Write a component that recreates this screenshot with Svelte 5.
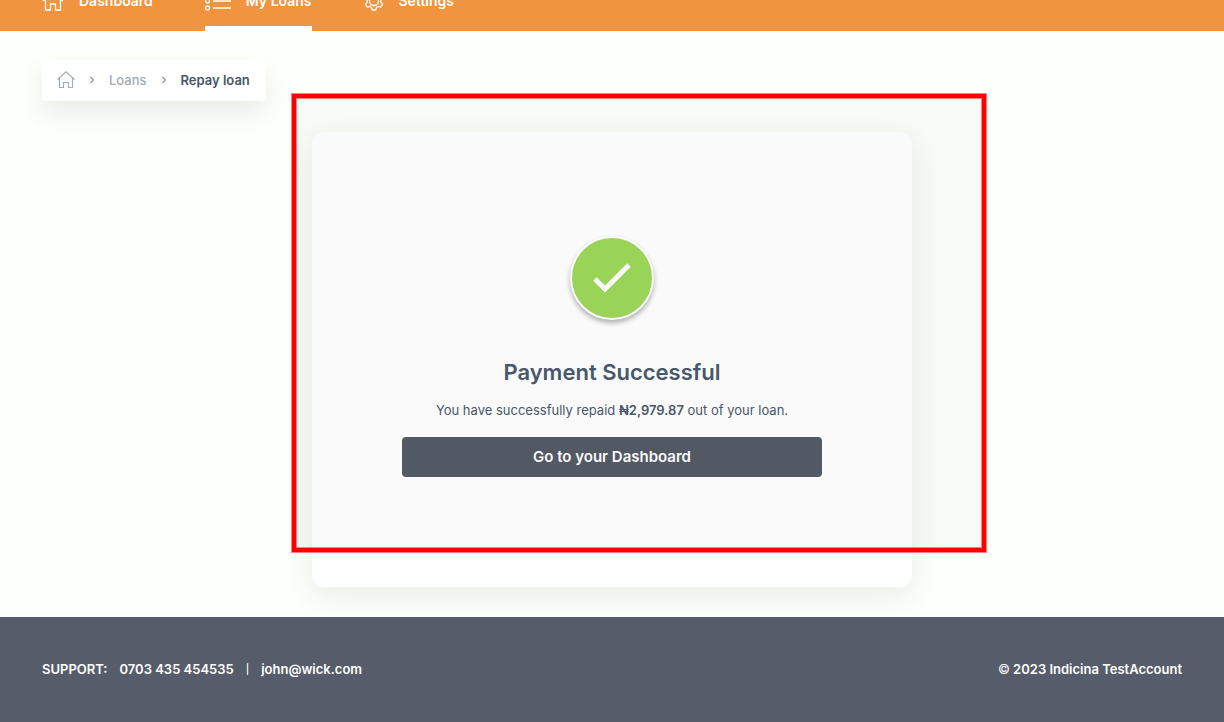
<script>
  const amount = '₦2,979.87';
</script>

<div class="page">
  <header>
    <nav aria-label="Main">
      <a href="#dashboard">
        <svg width="22" height="20" viewBox="0 0 22 20"><path d="M1 10 11 1l10 9M3.500 9v10h5v-6h5v6h5V9" /></svg>
        Dashboard
      </a>
      <a href="#loans" class="active">
        <svg width="26" height="20" viewBox="0 0 26 20"><circle cx="2.500" cy="3" r="2" /><circle cx="2.500" cy="10" r="2" /><circle cx="2.500" cy="17" r="2" /><path d="M8 3h18M8 10h18M8 17h18" /></svg>
        My Loans
      </a>
      <a href="#settings">
        <svg width="20" height="20" viewBox="0 0 20 20"><circle cx="10" cy="10" r="4.500" /><path d="M8.200 1h3.600l.6 2.500 1.900 1.100 2.500-.7 1.800 3.100-1.800 1.900v2.200l1.800 1.900-1.800 3.100-2.500-.7-1.900 1.100-.6 2.500H8.200l-.6-2.500-1.900-1.100-2.500.7-1.800-3.100 1.800-1.900V8.900L1.400 7l1.800-3.100 2.500.7 1.900-1.100z" stroke-linejoin="round" /></svg>
        Settings
      </a>
    </nav>
  </header>

  <main>
    <nav class="crumbs" aria-label="Breadcrumb">
      <a href="#home" aria-label="Home">
        <svg class="home" width="18" height="20" viewBox="0 0 18 20"><path d="M.5 9.500 9 1.700l8.500 7.800M2.500 8v9.500h4v-5h5v5h4V8" /></svg>
      </a>
      <svg class="chevron" width="6" height="8" viewBox="0 0 6 8"><path d="m1.500 1 3 3-3 3" /></svg>
      <a href="#loans">Loans</a>
      <svg class="chevron" width="6" height="8" viewBox="0 0 6 8"><path d="m1.500 1 3 3-3 3" /></svg>
      <span aria-current="page">Repay loan</span>
    </nav>

    <section class="card">
      <div class="badge">
        <svg width="40" height="32" viewBox="0 0 40 32"><path d="m3 17 10 10L37 3" /></svg>
      </div>
      <h1>Payment Successful</h1>
      <p>You have successfully repaid <strong>{amount}</strong> out of your loan.</p>
      <button type="button">Go to your Dashboard</button>
      <div class="highlight"></div>
    </section>
  </main>

  <footer>
    <div class="support">
      <span>SUPPORT:</span>
      <a href="tel:0703435454535">0703 435 454535</a>
      <span class="bar">|</span>
      <a href="mailto:john@wick.com">john@wick.com</a>
    </div>
    <div><span class="copy">©</span> 2023 Indicina TestAccount</div>
  </footer>
</div>

<style>
  :global(body) {
    margin: 0;
    background: #fdfffa;
  }
  .page {
    display: flex;
    flex-direction: column;
    min-height: 100vh;
    overflow: hidden;
    font: 500 13px/20px Inter, sans-serif;
    color: #4a5a6d;
  }
  a {
    color: inherit;
    text-decoration: none;
  }
  svg {
    display: block;
    flex: none;
    fill: none;
    stroke: currentColor;
  }
  header {
    margin-top: -29px;
    padding: 0 42px;
    background: #f0943f;
    color: #fff;
  }
  header nav {
    display: flex;
    gap: 52px;
  }
  header a {
    display: flex;
    align-items: center;
    gap: 15px;
    height: 60px;
    box-sizing: border-box;
    font-size: 14px;
    font-weight: 600;
  }
  header svg {
    stroke-width: 1.3;
  }
  .active {
    box-shadow: inset 0 -5px #fff;
  }
  main {
    flex: 1;
    padding: 29px 42px 30px;
  }
  .crumbs {
    display: flex;
    align-items: center;
    gap: 14px;
    width: fit-content;
    height: 41px;
    padding: 0 16px 1px 15px;
    box-sizing: border-box;
    border-radius: 4px;
    background: #fff;
    color: #a3abb5;
    box-shadow: 0 12px 25px rgba(60, 70, 60, 0.09);
  }
  .crumbs span {
    font-weight: 600;
    color: #4a5668;
  }
  .home {
    stroke-width: 1.2;
  }
  .chevron {
    stroke: #8c96a3;
    stroke-width: 1.2;
  }
  .card {
    position: relative;
    display: flex;
    flex-direction: column;
    align-items: center;
    max-width: 600px;
    margin: 31px auto 0;
    padding: 104px 90px 110px;
    box-sizing: border-box;
    border-radius: 12px;
    background: #fff;
    box-shadow: 0 10px 30px rgba(60, 70, 60, 0.09);
  }
  .badge {
    display: grid;
    place-items: center;
    width: 80px;
    height: 80px;
    border: 2px solid #fff;
    border-radius: 50%;
    background: #9dd85a;
    color: #fff;
    box-shadow: 0 3px 5px rgba(0, 0, 0, 0.3);
  }
  .badge svg {
    stroke-width: 5;
  }
  h1 {
    margin: 36px 0 0;
    font-size: 22px;
    line-height: 32px;
    font-weight: 600;
  }
  p {
    margin: 12px 0 17px;
    font-weight: 400;
    text-align: center;
  }
  strong {
    font-weight: 600;
  }
  button {
    width: 100%;
    height: 40px;
    padding: 0;
    border: 0;
    border-radius: 4px;
    background: #545a67;
    color: #fff;
    font: 600 15px/20px Inter, sans-serif;
  }
  .highlight {
    position: absolute;
    inset: -39px -75px 34px -21px;
    border: 1px solid #ff8080;
    background: rgba(0, 0, 0, 0.02);
    box-shadow:
      inset 0 0 0 4px #f00,
      inset 0 0 0 5px #ff8080;
    pointer-events: none;
  }
  footer {
    display: flex;
    justify-content: space-between;
    padding: 42px 42px 43px;
    background: #565c6a;
    color: #fff;
    font-weight: 600;
  }
  .support {
    display: flex;
    gap: 12px;
  }
  .bar {
    font-size: 10px;
    font-weight: 500;
  }
  .copy {
    font-weight: 400;
  }
</style>
